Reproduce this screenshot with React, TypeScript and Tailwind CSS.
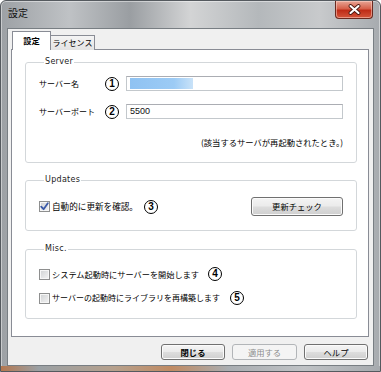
import type { ReactNode } from "react";

const jp = "font-['Noto_Sans_CJK_JP','Noto_Sans',sans-serif]";
const latin = "font-['DejaVu_Sans',sans-serif]";

function Circled({ n }: { n: number }) {
  return (
    <span className="flex h-[14px] w-[14px] shrink-0 items-center justify-center rounded-full border-[1.6px] border-black font-['Liberation_Sans',sans-serif] text-[10px] font-bold leading-none text-black">
      {n}
    </span>
  );
}

function Checkbox({ checked = false }: { checked?: boolean }) {
  return (
    <span className="flex h-[11px] w-[11px] shrink-0 items-center justify-center border border-[#8e8f8f] bg-[linear-gradient(135deg,#cfd1d3_0%,#f4f4f4_100%)] shadow-[inset_0_0_0_1px_#f6f6f6]">
      {checked && (
        <svg width="9" height="9" viewBox="0 0 9 9">
          <path d="M1.2 4.6 L3.6 7.2 L7.8 1.2" fill="none" stroke="#3c5ba8" strokeWidth="1.8" strokeLinecap="round" strokeLinejoin="round" />
        </svg>
      )}
    </span>
  );
}

function Button({ children, disabled = false, className = "" }: { children: ReactNode; disabled?: boolean; className?: string }) {
  return (
    <button
      type="button"
      className={`flex items-center justify-center rounded-[3px] border ${jp} text-[8.3px] leading-none ${
        disabled
          ? "border-[#b2b5b8] bg-[#f4f4f4] text-[#8d8d8d]"
          : "border-[#707070] bg-[linear-gradient(to_bottom,#f4f4f4_0%,#ebebeb_48%,#dddddd_52%,#cfcfcf_100%)] text-black shadow-[inset_0_0_0_1px_#fbfbfb]"
      } ${className}`}
    >
      {children}
    </button>
  );
}

function Group({ title, children, className = "" }: { title: string; children: ReactNode; className?: string }) {
  return (
    <fieldset className={`rounded-[3px] border border-[#d3d7da] px-[13px] shadow-[inset_0_0_0_1px_#ffffff] ${className}`}>
      <legend className={`ml-[5px] px-[1px] ${latin} text-[8px] leading-[10px] tracking-[0.3px] text-[#222]`}>{title}</legend>
      {children}
    </fieldset>
  );
}

function TextField({ children }: { children?: ReactNode }) {
  return (
    <div className="flex h-[15px] flex-1 items-center border border-[#c3c8cc] border-t-[#abadb3] bg-white pl-[3px] font-['Liberation_Sans',sans-serif] text-[9px] text-[#111]">
      {children}
    </div>
  );
}

export default function App() {
  return (
    <div className="flex h-[372px] w-[381px] flex-col overflow-hidden rounded-t-[6px] border border-[#555a5f] bg-[linear-gradient(90deg,#9da1a5_0%,#bfc2c5_18%,#9a9ea2_34%,#d3d4d5_50%,#b4b8bb_68%,#c8cacc_84%,#a7abaf_100%)] shadow-[inset_0_0_0_1px_rgba(255,255,255,0.45)]">
      <div className="flex h-[27px] shrink-0 items-start justify-between">
        <span className={`ml-[7px] mt-[6px] ${jp} text-[10px] leading-[12px] text-[#111]`}>設定</span>
        <div className="mr-[7px] flex h-[18px] w-[38px] items-center justify-center rounded-b-[4px] border border-t-0 border-[#6a2a20] bg-[linear-gradient(to_bottom,#e8a595_0%,#d6604a_45%,#bf2c17_55%,#d4553b_100%)] shadow-[inset_0_0_0_1px_rgba(255,220,210,0.5)]">
          <svg width="13" height="11" viewBox="0 0 13 11">
            <path d="M2.5 2 L10.5 9 M10.5 2 L2.5 9" stroke="#4a1a12" strokeWidth="3.8" strokeLinecap="round" />
            <path d="M2.5 2 L10.5 9 M10.5 2 L2.5 9" stroke="#ffffff" strokeWidth="2.1" strokeLinecap="round" />
          </svg>
        </div>
      </div>

      <div className="mx-[6px] flex h-[338px] shrink-0 flex-col border border-[#787e83] bg-[#f0f0f0]">
        <div className="ml-[3px] mr-[4px] mt-[2px] flex flex-col">
          <div className="relative z-10 -mb-px flex h-[19px] items-end pl-[1px]">
            <div className={`flex h-[19px] w-[39px] items-start justify-center border border-b-0 border-[#898c95] bg-white pt-[3px] ${jp} text-[8.3px] font-bold leading-[10px] text-black`}>
              設定
            </div>
            <div className={`flex h-[15px] w-[44px] items-center justify-center border border-b-0 border-l-0 border-[#898c95] bg-[linear-gradient(to_bottom,#f4f4f4,#e3e3e3)] ${jp} text-[8px] leading-none text-black`}>
              ライセンス
            </div>
          </div>

          <div className="flex h-[288px] flex-col border border-[#898c95] bg-white pl-[13px] pr-[11px]">
            <Group title="Server" className="mt-[7px] h-[106px]">
              <div className="mt-[9px] flex h-[15px] items-center">
                <span className={`w-[66px] ${jp} text-[8px] text-black`}>サーバー名</span>
                <Circled n={1} />
                <div className="ml-[7px] flex flex-1">
                  <TextField>
                    <span className="h-[11px] w-[63px] bg-[linear-gradient(90deg,#8fc2f2_0%,#9ccbf5_70%,#c9e2f8_100%)]" />
                  </TextField>
                </div>
              </div>
              <div className="mt-[13px] flex h-[15px] items-center">
                <span className={`w-[66px] ${jp} text-[8px] text-black`}>サーバーポート</span>
                <Circled n={2} />
                <div className="ml-[7px] flex flex-1">
                  <TextField>5500</TextField>
                </div>
              </div>
              <p className={`mt-[18px] text-right ${jp} text-[8.3px] leading-[11px] text-black`}>(該当するサーバが再起動されたとき。)</p>
            </Group>

            <Group title="Updates" className="mt-[12px] h-[56px]">
              <div className="mt-[12px] flex h-[19px] items-center">
                <Checkbox checked />
                <span className={`ml-[2px] ${jp} text-[8.6px] text-black`}>自動的に更新を確認。</span>
                <span className="ml-[6px]">
                  <Circled n={3} />
                </span>
                <Button className="ml-auto h-[19px] w-[92px]">更新チェック</Button>
              </div>
            </Group>

            <Group title="Misc." className="mt-[13px] h-[75px]">
              <div className="mt-[14px] flex h-[12px] items-center">
                <Checkbox />
                <span className={`ml-[2px] ${jp} text-[8.2px] text-black`}>システム起動時にサーバーを開始します</span>
                <span className="ml-[9px]">
                  <Circled n={4} />
                </span>
              </div>
              <div className="mt-[12px] flex h-[12px] items-center">
                <Checkbox />
                <span className={`ml-[2px] ${jp} text-[8px] text-black`}>サーバーの起動時にライブラリを再構築します</span>
                <span className="ml-[10px]">
                  <Circled n={5} />
                </span>
              </div>
            </Group>
          </div>
        </div>

        <div className="mr-[5px] mt-[7px] flex justify-end gap-[7px]">
          <Button className="h-[16px] w-[64px] font-bold">閉じる</Button>
          <Button disabled className="h-[16px] w-[65px]">
            適用する
          </Button>
          <Button className="h-[16px] w-[64px]">ヘルプ</Button>
        </div>
      </div>

      <div className="flex-1 bg-[linear-gradient(90deg,#b5774f_0%,#9aa0a4_10%,#b6a08c_30%,#c08a62_45%,#a9adb1_60%,#bfc2c5_80%,#a6aaae_100%)]" />
    </div>
  );
}
